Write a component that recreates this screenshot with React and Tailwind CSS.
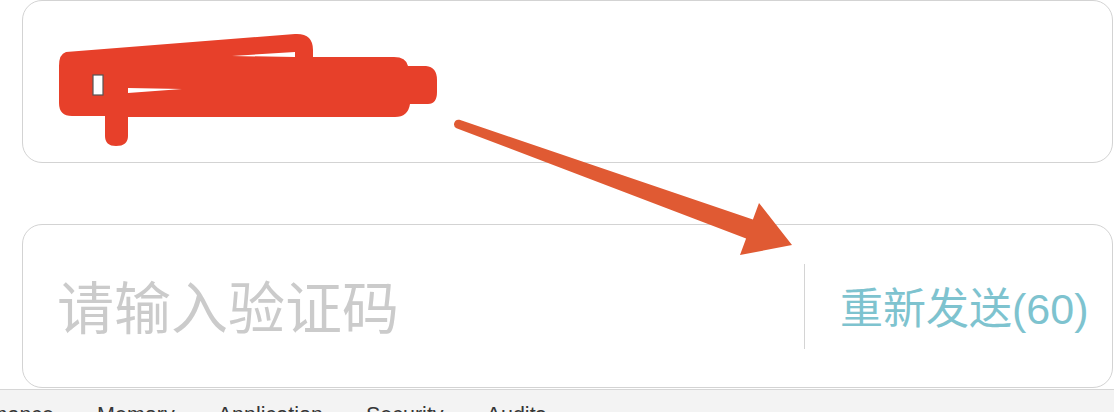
import React from 'react';

const tabs = ['Performance', 'Memory', 'Application', 'Security', 'Audits'];

// red redaction scribble + arrow drawn over the form
const Annotations = () => (
  <svg
    className="absolute left-0 top-0 pointer-events-none"
    width="1114"
    height="412"
    viewBox="0 0 1114 412"
  >
    <path
      fill="#e7402a"
      d="M66 52 L295 34 Q313 33 313 50 L313 57 L394 57 Q406 57 408 66 L426 66 Q437 67 437 80 L437 92 Q437 104 428 104 L410 104 Q408 117 395 117 L128 117 L128 136 Q128 146 116 146 Q105 146 105 136 L105 116 L72 116 Q59 116 59 103 L59 66 Q59 54 66 52 Z"
    />
    <rect x="93" y="75" width="10" height="20" fill="#ffffff" stroke="#555" strokeWidth="1.2" />
    <path fill="#ffffff" d="M128 88 L182 89 L128 93 Z" />
    <path fill="#ffffff" d="M232 56 L295 52 L295 57 Z" />
    <path
      fill="#e05a33"
      d="M459.5 119.8 L752.9 219.6 L759 203 L792 245 L740 255 L746.1 238.4 L456.5 128.2 A4.5 4.5 0 0 1 459.5 119.8 Z"
    />
  </svg>
);

const App = () => {
  return (
    <div
      className="relative w-[1114px] h-[412px] overflow-hidden bg-white"
      style={{ fontFamily: '"Liberation Sans", "Noto Sans CJK SC", sans-serif' }}
    >
      <div className="pl-[22px] pr-px">
        <div className="h-[163px] rounded-[20px] border-[1.5px] border-[#d3d3d3] bg-white"></div>

        <div className="mt-[61px] h-[164px] rounded-[20px] border-[1.5px] border-[#d3d3d3] bg-white flex items-center">
          <div className="flex-1 pl-[34px] pt-[6px] text-[57px] leading-none text-[#cbcbcb]">
            请输入验证码
          </div>
          <div className="w-[308px] flex items-center">
            <div className="w-px h-[85px] bg-[#d4d4d4]"></div>
            <div className="ml-[35px] pt-[6px] text-[43px] leading-none text-[#7ec3cf]">
              重新发送(60)
            </div>
          </div>
        </div>
      </div>

      <div className="mt-px h-[24px] border-t border-[#d6d6d6] bg-[#f3f3f3] overflow-hidden">
        <div className="flex gap-[43px] -ml-[69px] pt-[9px] text-[21.5px] text-[#363636] whitespace-nowrap">
          {tabs.map((t) => (
            <span key={t}>{t}</span>
          ))}
        </div>
      </div>

      <Annotations />
    </div>
  );
};

export default App;
